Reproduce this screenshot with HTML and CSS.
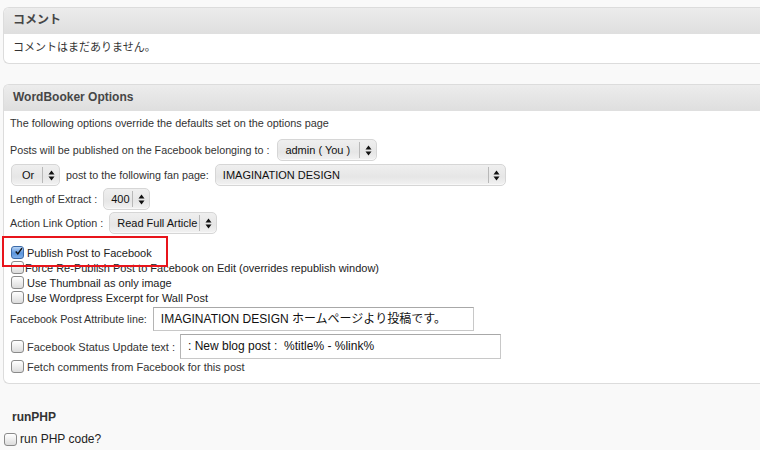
FILE: index.html
```html
<!DOCTYPE html>
<html lang="ja">
<head>
<meta charset="utf-8">
<link rel="stylesheet" href="styles.css">
</head>
<body>
<div class="page">
  <div class="postbox box-comments">
    <h3 class="hndle">コメント</h3>
    <div class="inside-c">コメントはまだありません。</div>
  </div>

  <div class="postbox box-wb">
    <h3 class="hndle">WordBooker Options</h3>
    <div class="inside">
      <p class="intro">The following options override the defaults set on the options page</p>
      <div class="row r1">
        <span class="lbl">Posts will be published on the Facebook belonging to :</span>
        <span class="sel w-admin"><span class="sel-txt">admin ( You )</span><span class="sel-arr"><svg width="7" height="11" viewBox="0 0 7 11"><path d="M3.5 0.5 L6.5 4.5 L0.5 4.5 Z M3.5 10.5 L6.5 6.5 L0.5 6.5 Z" fill="#111"/></svg></span></span>
      </div>
      <div class="row r2">
        <span class="sel w-or"><span class="sel-txt txt-or">Or</span><span class="sel-arr"><svg width="7" height="11" viewBox="0 0 7 11"><path d="M3.5 0.5 L6.5 4.5 L0.5 4.5 Z M3.5 10.5 L6.5 6.5 L0.5 6.5 Z" fill="#111"/></svg></span></span>
        <span class="lbl">post to the following fan page:</span>
        <span class="sel w-fan"><span class="sel-txt">IMAGINATION DESIGN</span><span class="sel-arr"><svg width="7" height="11" viewBox="0 0 7 11"><path d="M3.5 0.5 L6.5 4.5 L0.5 4.5 Z M3.5 10.5 L6.5 6.5 L0.5 6.5 Z" fill="#111"/></svg></span></span>
      </div>
      <div class="row r3">
        <span class="lbl">Length of Extract :</span>
        <span class="sel w-400"><span class="sel-txt">400</span><span class="sel-arr"><svg width="7" height="11" viewBox="0 0 7 11"><path d="M3.5 0.5 L6.5 4.5 L0.5 4.5 Z M3.5 10.5 L6.5 6.5 L0.5 6.5 Z" fill="#111"/></svg></span></span>
      </div>
      <div class="row r4">
        <span class="lbl">Action Link Option :</span>
        <span class="sel w-read"><span class="sel-txt">Read Full Article</span><span class="sel-arr"><svg width="7" height="11" viewBox="0 0 7 11"><path d="M3.5 0.5 L6.5 4.5 L0.5 4.5 Z M3.5 10.5 L6.5 6.5 L0.5 6.5 Z" fill="#111"/></svg></span></span>
      </div>

      <div class="checks">
        <div class="crow"><span class="cb checked"><svg width="13" height="13" viewBox="0 0 13 13"><path d="M2.5 6.5 L5.5 10 L11.5 1.5" fill="none" stroke="#111" stroke-width="2"/></svg></span><span class="clbl">Publish Post to Facebook</span></div>
        <div class="crow tight"><span class="cb"></span><span class="clbl">Force Re-Publish Post to Facebook on Edit (overrides republish window)</span></div>
        <div class="crow"><span class="cb"></span><span class="clbl">Use Thumbnail as only image</span></div>
        <div class="crow"><span class="cb"></span><span class="clbl">Use Wordpress Excerpt for Wall Post</span></div>
      </div>

      <div class="row r-attr">
        <span class="lbl">Facebook Post Attribute line:</span>
        <span class="txtin">IMAGINATION DESIGN ホームページより投稿です。</span>
      </div>
      <div class="row r-status">
        <span class="cb"></span>
        <span class="lbl">Facebook Status Update text :</span>
        <span class="txtin">: New blog post :&nbsp; %title% - %link%</span>
      </div>
      <div class="crow r-fetch"><span class="cb"></span><span class="lbl">Fetch comments from Facebook for this post</span></div>
    </div>
  </div>

  <div class="runphp">
    <h4 class="rp-title">runPHP</h4>
    <div class="rp-row"><span class="cb"></span><span class="rp-lbl">run PHP code?</span></div>
  </div>

  <div class="annot"></div>
</div>
</body>
</html>
```

FILE: styles.css
```css
* { box-sizing: border-box; }
html, body { margin: 0; padding: 0; }
body {
  background: #f9f9f9;
  font-family: "Liberation Sans", Arial, "Noto Sans CJK JP", sans-serif;
  color: #333;
  width: 760px;
  height: 450px;
  overflow: hidden;
}
.page {
  position: relative;
  padding: 7px 0 0 3px;
}
.postbox {
  background: #fff;
  border: 1px solid #dcdcdc;
  border-right: none;
  border-radius: 6px 0 0 6px;
  overflow: hidden;
}
.hndle {
  margin: 0;
  height: 26px;
  line-height: 25px;
  padding-left: 9px;
  font-size: 12px;
  font-weight: bold;
  color: #464646;
  background: linear-gradient(#ececec, #dfdfdf);
  border-bottom: 1px solid #dfdfdf;
}
.inside-c {
  height: 29px;
  line-height: 27px;
  padding-left: 9px;
  font-size: 11px;
  color: #333;
}
.box-wb { margin-top: 20px; }
.inside {
  padding: 3px 0 9px 6px;
  font-size: 10.75px;
}
.intro {
  margin: 0;
  line-height: 18px;
  font-size: 10.85px;
}
.row {
  display: flex;
  align-items: center;
  gap: 6px;
}
.r1 { margin-top: 7px; }
.r2 { margin-top: 3px; }
.r3 { margin-top: 2px; }
.r4 { margin-top: 2px; }
.lbl { white-space: nowrap; }

.sel {
  display: flex;
  align-items: stretch;
  height: 22px;
  border: 1px solid #d6d6d6;
  border-radius: 5px;
  background: linear-gradient(#efefef, #e6e6e6 60%, #f2f2f2);
  box-shadow: inset 0 -1px 0 #f8f8f8;
  font-size: 11px;
  color: #111;
}
.sel-txt {
  flex: 1;
  padding-left: 7px;
  line-height: 20px;
  white-space: nowrap;
}
.txt-or { padding-left: 10px; }
.sel-arr {
  width: 17px;
  border-left: 1px solid #b8b8b8;
  margin: 2px 0;
  display: flex;
  align-items: center;
  justify-content: center;
}
.w-admin { width: 100px; margin-left: 2px; }
.w-or { width: 49px; margin-left: 1px; }
.w-fan { width: 291px; }
.w-400 { width: 47px; }
.w-read { width: 108px; }

.checks { margin-top: 11px; }
.crow {
  display: flex;
  align-items: center;
  height: 15px;
  font-size: 11px;
  color: #222;
}
.cb {
  width: 13px;
  height: 13px;
  flex: none;
  margin-left: 1px;
  margin-right: 3px;
  border: 1px solid #8a8a8a;
  border-radius: 3px;
  background: linear-gradient(#ffffff, #dcdcdc);
  display: inline-flex;
  align-items: center;
  justify-content: center;
}
.cb.checked {
  background: linear-gradient(#b8d4f5, #5b95dd 55%, #7fb0ea);
  border-color: #3b6aa8;
  overflow: visible;
}
.cb.checked svg { margin-top: -2px; margin-left: 2px; }
.crow.tight .cb { margin-right: 1px; }

.r-attr { margin-top: 2px; height: 24px; }
.txtin {
  height: 24px;
  width: 321px;
  border: 1px solid #c8c8c8;
  border-top-color: #a8a8a8;
  border-left-color: #b4b4b4;
  background: #fff;
  padding-left: 7px;
  line-height: 22px;
  font-size: 12px;
  color: #111;
  white-space: nowrap;
}
.r-status { margin-top: 3px; gap: 0; }
.r-status .cb { margin-right: 3px; }
.r-status .lbl { font-size: 11px; }
.r-status .txtin { margin-left: 5px; height: 25px; }
.r-fetch { margin-top: 0; color: #333; }
.r-fetch .lbl { font-size: 11px; }

.runphp { padding-top: 25px; }
.rp-title {
  margin: 0 0 0 9px;
  font-size: 12px;
  font-weight: bold;
  color: #333;
  line-height: 16px;
}
.rp-row {
  display: flex;
  align-items: center;
  margin-top: 7px;
  margin-left: 1px;
  font-size: 12px;
  color: #222;
}
.rp-row .cb { margin-left: 0; margin-right: 3px; }

.annot {
  position: absolute;
  left: 2px;
  top: 236px;
  width: 166px;
  height: 31px;
  border: 2px solid #e8141b;
}
```
